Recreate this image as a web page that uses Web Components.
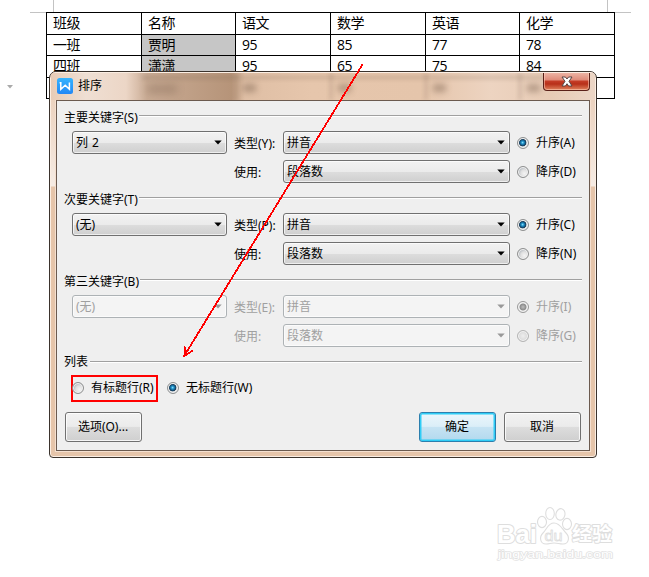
<!DOCTYPE html>
<html lang="zh-CN">
<head>
<meta charset="utf-8">
<title>排序</title>
<style>
html,body{margin:0;background:#fff;}
body{width:649px;height:577px;overflow:hidden;position:relative;font-family:"Noto Sans","Noto Sans CJK SC",sans-serif;font-size:12px;color:#000;}
sort-dialog{position:absolute;left:49px;top:71px;}
arrow-note{position:absolute;left:0;top:0;}
brand-mark{position:absolute;left:490px;top:500px;}
</style>
</head>
<body>
<doc-page></doc-page>
<sort-dialog></sort-dialog>
<arrow-note></arrow-note>
<brand-mark></brand-mark>
<script>
function define(name, html, init){
  const t=document.createElement('template');
  t.innerHTML=html;
  customElements.define(name, class extends HTMLElement{
    constructor(){super();this.attachShadow({mode:'open'}).appendChild(t.content.cloneNode(true));}
    connectedCallback(){ if(init) init(this,this.shadowRoot); }
  });
}

/* Document behind the dialog */
define('doc-page', `<style>
:host{display:block;padding:12px 0 0 46px;position:relative}
.grid{display:grid;width:569px;box-sizing:border-box;grid-template-columns:95px 94px 95px 95px 94px 95px;grid-template-rows:22px 21px 22px 21px;border-left:1px solid #000;border-top:1px solid #000;font-size:14px}
.m{position:absolute;background:#c3c3c3}
.t{position:absolute;left:7px;top:85px}
</style>
<div class="grid">
<doc-cell>班级</doc-cell><doc-cell>名称</doc-cell><doc-cell>语文</doc-cell><doc-cell>数学</doc-cell><doc-cell>英语</doc-cell><doc-cell>化学</doc-cell>
<doc-cell>一班</doc-cell><doc-cell sel>贾明</doc-cell><doc-cell>95</doc-cell><doc-cell>85</doc-cell><doc-cell>77</doc-cell><doc-cell>78</doc-cell>
<doc-cell>四班</doc-cell><doc-cell sel>潇潇</doc-cell><doc-cell>95</doc-cell><doc-cell>65</doc-cell><doc-cell>75</doc-cell><doc-cell>84</doc-cell>
<doc-cell></doc-cell><doc-cell></doc-cell><doc-cell></doc-cell><doc-cell></doc-cell><doc-cell></doc-cell><doc-cell></doc-cell>
</div>
<i class="m" style="left:53px;top:0;width:1px;height:12px"></i><i class="m" style="left:30px;top:12px;width:16px;height:1px"></i>
<i class="m" style="left:607px;top:0;width:1px;height:12px"></i><i class="m" style="left:615px;top:12px;width:16px;height:1px"></i>
<svg class="t" width="6" height="4"><path d="M0 0H6L3 3.5Z" fill="#aaa"/></svg>`);

define('doc-cell', `<style>
:host{display:flex;align-items:center;box-sizing:border-box;border-right:1px solid #000;border-bottom:1px solid #000;padding:0 0 2px 6px;line-height:19px;overflow:hidden;white-space:nowrap;font-family:"Open Sans","Noto Sans CJK SC",sans-serif;font-size:14px;font-weight:400;letter-spacing:-.4px;min-width:0}
:host([sel]){background:#c6c6c6}
</style><slot></slot>`);

/* Dialog window */
define('sort-dialog', `<style>
:host{display:flex;flex-direction:column;box-sizing:border-box;width:548px;height:387px;border:1px solid #3b332d;border-radius:7px 7px 4px 4px;padding:0 6px 6px;overflow:hidden;
background:linear-gradient(#e7c6ac 0,#ecd3c0 30px,#f6ece4 114px,#e6c5aa 115px,#e6c5aa 100%);box-shadow:inset 0 0 0 1px #fbeee3}
glass-title{margin:0 -5px}
.body{flex:1;box-sizing:border-box;border:1px solid #6b5a4f;background:#efefef;padding:8px 7px 0 8px;display:flex;flex-direction:column;box-shadow:0 0 0 1px #f5e0d0;min-height:0}
key-group{margin-bottom:8px}
key-group:nth-of-type(3){margin-bottom:6px}
.opts{display:flex;height:27px;align-items:center;margin-top:6px}
.mark{box-sizing:border-box;width:87px;height:27px;border:2px solid #f00;margin-left:6px;display:flex;align-items:center;padding-bottom:1px}
.mark radio-item{margin-left:-1px}
.opts>radio-item{margin:-1px 0 0 9px}
.foot{display:flex;margin:10px 1px 0 0;gap:8px}
.sp{flex:1}
</style>
<glass-title>排序</glass-title>
<div class="body">
<key-group cap="主要关键字(S)" val="列 2" k="Y" a="A" b="D"></key-group>
<key-group cap="次要关键字(T)" val="(无)" k="P" a="C" b="N"></key-group>
<key-group cap="第三关键字(B)" val="(无)" k="E" a="I" b="G" disabled></key-group>
<group-cap low>列表</group-cap>
<div class="opts"><div class="mark"><radio-item>有标题行(R)</radio-item></div><radio-item on>无标题行(W)</radio-item></div>
<div class="foot"><push-button>选项(O)...</push-button><span class="sp"></span><push-button primary>确定</push-button><push-button>取消</push-button></div>
</div>`);

define('glass-title', `<style>
:host{display:flex;height:28px;align-items:flex-start;position:relative;overflow:hidden;box-sizing:border-box;padding-left:6px;flex:none;border-top:1px solid #fbeee3;
background:linear-gradient(90deg,#e8ccb6 0,#efdfd3 35px,#ecd6c6 75px,#c9ab94 96px,#b69479 180px,#dfbfa5 194px,#e6c6ac 260px,#e5c5ab 370px,#edd4c1 440px,#e7cbb5 500px,#ecd6c6 100%)}
.logo{margin-top:5px;flex:none}
.cap{margin:4px 0 0 5px;line-height:18px;position:relative}
.sp{flex:1}
.s{position:absolute;filter:blur(3px);background:#6f5644;opacity:.42}
.x{box-sizing:border-box;width:47px;height:19px;margin:-1px 5px 0 0;border:1px solid #5a2018;border-top:0;border-radius:0 0 4px 4px;position:relative;background:linear-gradient(#eeb9a9 0,#df8b79 8px,#c53d27 9px,#b83019 12px,#e0835e 100%);box-shadow:inset 0 0 0 1px rgba(255,210,190,.55);display:flex;align-items:center;justify-content:center}
</style>
<i class="s" style="left:96px;top:11px;width:30px;height:10px;opacity:.3;filter:blur(4px)"></i>
<i class="s" style="left:192px;top:11px;width:13px;height:8px"></i>
<i class="s" style="left:287px;top:11px;width:13px;height:8px"></i>
<i class="s" style="left:382px;top:11px;width:13px;height:8px"></i>
<i class="s" style="left:476px;top:11px;width:13px;height:8px"></i>
<i class="s" style="left:90px;top:3px;width:405px;height:3px;opacity:.25;filter:blur(2px)"></i>
<i class="s" style="left:184px;top:0;width:2px;height:27px;opacity:.25;filter:blur(2px)"></i>
<i class="s" style="left:279px;top:0;width:2px;height:27px;opacity:.3;filter:blur(2px)"></i>
<i class="s" style="left:374px;top:0;width:2px;height:27px;opacity:.3;filter:blur(2px)"></i>
<i class="s" style="left:468px;top:0;width:2px;height:27px;opacity:.3;filter:blur(2px)"></i>
<svg class="logo" width="16" height="16"><defs><linearGradient id="g" x2="0" y2="1"><stop stop-color="#35b4ff"/><stop offset="1" stop-color="#2388f5"/></linearGradient></defs><rect width="16" height="16" rx="2.5" fill="url(#g)"/><path d="M2.6 4.8H3.8V11.2L8.2 7.2L12.4 11.2V4.6" fill="none" stroke="#fff" stroke-width="1.5"/></svg>
<span class="cap"><slot></slot></span><span class="sp"></span>
<span class="x"><svg width="12" height="11" viewBox="0 0 12 11"><path d="M1 1H4.4L6 3L7.6 1H11L8 5.3L11 10H7.6L6 7.7L4.4 10H1L4 5.3Z" fill="#fff" stroke="#574644" stroke-width="1"/></svg></span>`);

define('group-cap', `<style>
:host{display:flex;height:16px;line-height:18px;white-space:nowrap;margin-left:-1px}
i{flex:1;height:1px;margin:6px 0 0 1px;background:#a0a0a0;border-bottom:1px solid #fff}
:host([low]) i{margin-top:8px;margin-left:2px}
</style><span><slot></slot></span><i></i>`);

define('key-group', `<style>
:host{display:block}
.g{display:grid;grid-template-columns:155px 49px 220px 1fr;column-gap:7px;row-gap:6px;grid-auto-rows:23px;padding:6px 0 0 7px;align-items:center}
.g span{white-space:nowrap}
.c{margin-left:-7px}
:host([disabled]) .g{color:#a0a0a0}
</style><group-cap></group-cap>
<div class="g"><drop-box class="v"></drop-box><span class="k"></span><drop-box class="c">拼音</drop-box><radio-item on class="a"></radio-item>
<i></i><span>使用:</span><drop-box class="c">段落数</drop-box><radio-item class="b"></radio-item></div>`, (h,r)=>{
  const q=s=>r.querySelector(s), at=n=>h.getAttribute(n);
  q('group-cap').textContent=at('cap');
  q('.v').textContent=at('val');
  q('.k').textContent='类型('+at('k')+'):';
  q('.a').textContent='升序('+at('a')+')';
  q('.b').textContent='降序('+at('b')+')';
  if(h.hasAttribute('disabled')) r.querySelectorAll('drop-box,radio-item').forEach(e=>e.setAttribute('off',''));
});

define('drop-box', `<style>
:host{display:flex;box-sizing:border-box;height:23px;border:1px solid #707070;border-radius:3px;align-items:center;padding:0 4px 0 3px;line-height:20px;white-space:nowrap;word-spacing:1px;
background:linear-gradient(#f2f2f2 0,#ebebeb 50%,#dddddd 51%,#cfcfcf 100%);box-shadow:inset 0 0 0 1px rgba(255,255,255,.65)}
:host([off]){border-color:#adb2b5;background:#f4f4f4;color:#a0a0a0}
span{flex:1}
svg{fill:#000;display:block}
:host([off]) svg{fill:#999}
</style><span><slot></slot></span><svg width="8" height="5"><path d="M0.3 0.5H7.7L4 4.5Z"/></svg>`);

define('radio-item', `<style>
:host{display:flex;align-items:center;gap:7px;white-space:nowrap;line-height:16px}
i{box-sizing:border-box;width:12px;height:12px;border-radius:50%;border:1px solid #8e8f8f;flex:none;background:radial-gradient(circle at 65% 65%,#f4f4f4 0,#e0e0e0 40%,#c2c6ca 60%);box-shadow:inset 0 0 0 1px #f4f4f4}
:host([on]) i{background:radial-gradient(circle at 46% 46%,#8fe0fb 0,#2497cd 1.3px,#125a88 2.6px,#17354f 3.4px,#d8dde0 4.1px)}
:host([off]) i{border-color:#b4b4b4;background:radial-gradient(circle,#eee 0,#d8d8d8 70%)}
:host([off][on]) i{border-color:#999;background:radial-gradient(circle,#bdbdbd 0,#8c8c8c 3px,#efefef 4px)}
</style><i></i><span><slot></slot></span>`);

define('push-button', `<style>
:host{display:flex;box-sizing:border-box;width:77px;height:30px;border:1px solid #707070;border-radius:3px;align-items:center;justify-content:center;white-space:nowrap;line-height:16px;padding:0 1px 1px 0;
background:linear-gradient(#f2f2f2 0,#ebebeb 48%,#dddddd 50%,#cfcfcf 100%);box-shadow:inset 0 0 0 1px rgba(255,255,255,.8)}
:host([primary]){border-color:#2c7fae;background:linear-gradient(#ecf6fb 0,#dbeef8 48%,#c6e3f3 50%,#b2d9ee 100%);box-shadow:inset 0 0 0 1.5px #2fcdf6}
</style><slot></slot>`);

/* Red pointer drawn over the dialog */
define('arrow-note', `<style>:host{display:block;pointer-events:none}svg{display:block}</style>
<svg width="649" height="400" fill="none" stroke="#f00" stroke-width="1.8" shape-rendering="crispEdges"><path d="M362.5 64.5L184.5 355.5M185.3 346.5L184.3 355.8L193 350.5"/></svg>`);

define('brand-mark', `<style>:host{display:block}svg{display:block}text{font-family:"Liberation Sans","Noto Sans CJK SC",sans-serif;font-weight:700}</style>
<svg width="140" height="70" fill="#fff" stroke="#dedede" stroke-width="1.1" stroke-linejoin="round">
<text x="7" y="42.5" font-size="26" textLength="40" lengthAdjust="spacingAndGlyphs" paint-order="stroke" stroke-width="2">Bai</text>
<ellipse cx="52" cy="22" rx="4.5" ry="5.6"/><ellipse cx="60" cy="13.5" rx="4.3" ry="6"/><ellipse cx="70.5" cy="14.3" rx="4.5" ry="5.8" transform="rotate(12 70 14)"/><ellipse cx="77" cy="24" rx="4.5" ry="5.6"/>
<path d="M64 23C58 23 57 29 53 33C49 37 50 44 56 44C60 44 60 43 64 43C68 43 69 44 73 44C79 44 80 37 76 33C72 29 70 23 64 23Z"/>
<text x="54.5" y="41" font-size="15" textLength="18" lengthAdjust="spacingAndGlyphs" stroke-width=".8" style="font-weight:400">du</text>
<text x="82" y="40.5" font-size="19" textLength="40" lengthAdjust="spacingAndGlyphs" paint-order="stroke" stroke-width="2">经验</text>
<text x="8" y="58" font-size="11.5" textLength="115" lengthAdjust="spacingAndGlyphs" fill="#fff" stroke="#e2e2e2" stroke-width="1.4" paint-order="stroke" style="font-family:'Liberation Sans',sans-serif;font-weight:400">jingyan.baidu.com</text>
</svg>`);
</script>
</body>
</html>
